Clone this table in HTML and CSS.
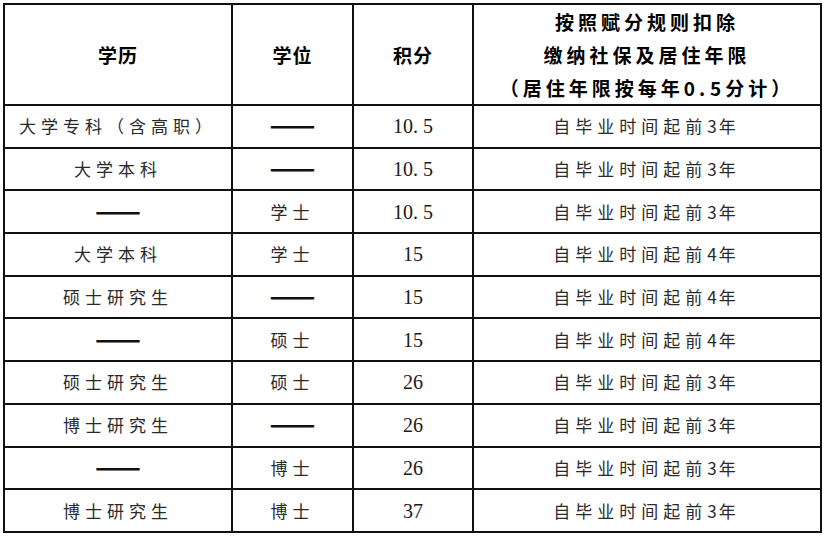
FILE: index.html
```html
<!DOCTYPE html>
<html lang="zh-CN">
<head>
<meta charset="utf-8">
<title>积分表</title>
<link rel="stylesheet" href="styles.css">
</head>
<body>
<table class="score-table">
  <colgroup>
    <col class="c-edu">
    <col class="c-deg">
    <col class="c-pts">
    <col class="c-rule">
  </colgroup>
  <thead>
    <tr class="head-row">
      <th class="h-short">学历</th>
      <th class="h-short">学位</th>
      <th class="h-short">积分</th>
      <th class="h-long">按照赋分规则扣除<br>缴纳社保及居住年限<br>（居住年限按每年0<span class="dot">.</span>5分计）</th>
    </tr>
  </thead>
  <tbody>
    <tr><td>大学专科（含高职）</td><td><span class="dash">——</span></td><td class="num">10<span class="dot">.</span>5</td><td>自毕业时间起前<span class="dg">3</span>年</td></tr>
    <tr><td>大学本科</td><td><span class="dash">——</span></td><td class="num">10<span class="dot">.</span>5</td><td>自毕业时间起前<span class="dg">3</span>年</td></tr>
    <tr><td><span class="dash">——</span></td><td>学士</td><td class="num">10<span class="dot">.</span>5</td><td>自毕业时间起前<span class="dg">3</span>年</td></tr>
    <tr><td>大学本科</td><td>学士</td><td class="num">15</td><td>自毕业时间起前<span class="dg">4</span>年</td></tr>
    <tr><td>硕士研究生</td><td><span class="dash">——</span></td><td class="num">15</td><td>自毕业时间起前<span class="dg">4</span>年</td></tr>
    <tr><td><span class="dash">——</span></td><td>硕士</td><td class="num">15</td><td>自毕业时间起前<span class="dg">4</span>年</td></tr>
    <tr><td>硕士研究生</td><td>硕士</td><td class="num">26</td><td>自毕业时间起前<span class="dg">3</span>年</td></tr>
    <tr><td>博士研究生</td><td><span class="dash">——</span></td><td class="num">26</td><td>自毕业时间起前<span class="dg">3</span>年</td></tr>
    <tr><td><span class="dash">——</span></td><td>博士</td><td class="num">26</td><td>自毕业时间起前<span class="dg">3</span>年</td></tr>
    <tr><td>博士研究生</td><td>博士</td><td class="num">37</td><td>自毕业时间起前<span class="dg">3</span>年</td></tr>
  </tbody>
</table>
</body>
</html>
```
FILE: styles.css
```css
html, body {
  margin: 0;
  padding: 0;
  background: #fff;
}

body {
  padding: 3px 0 0 3px;
  font-family: "Noto Sans CJK SC", "Noto Sans", sans-serif;
}

.score-table {
  table-layout: fixed;
  width: 819px;
  height: 530px;
  border-collapse: separate;
  border-spacing: 2px;
  background: #111;
}

.c-edu { width: 226px; }
.c-deg { width: 119px; }
.c-pts { width: 118px; }
.c-rule { width: 346px; }

.score-table th,
.score-table td {
  background: #fff;
  padding: 0;
  text-align: center;
  vertical-align: middle;
}

.head-row { height: 99px; }

.score-table tbody tr { height: 40.7px; }

.score-table th {
  font-weight: 700;
  color: #000;
  font-size: 19px;
}

.h-short {
  font-size: 20px;
  letter-spacing: 1px;
}

.h-long {
  letter-spacing: 4px;
  line-height: 33px;
  padding-bottom: 3px;
}

.h-long .dot {
  letter-spacing: 5px;
}

.score-table td {
  font-size: 17px;
  color: #2a2a2a;
  letter-spacing: 5px;
  line-height: 24px;
}

.dg {
  letter-spacing: 2px;
}

.score-table td.num {
  font-family: "Liberation Serif", serif;
  font-size: 20px;
  letter-spacing: 0;
  color: #1a1a1a;
}

.num .dot {
  display: inline-block;
  width: 10px;
  text-align: left;
}

.dash {
  font-family: "Noto Sans CJK SC", sans-serif;
  font-size: 27px;
  font-weight: 700;
  line-height: 24px;
  letter-spacing: 0;
  color: #111;
}
```
